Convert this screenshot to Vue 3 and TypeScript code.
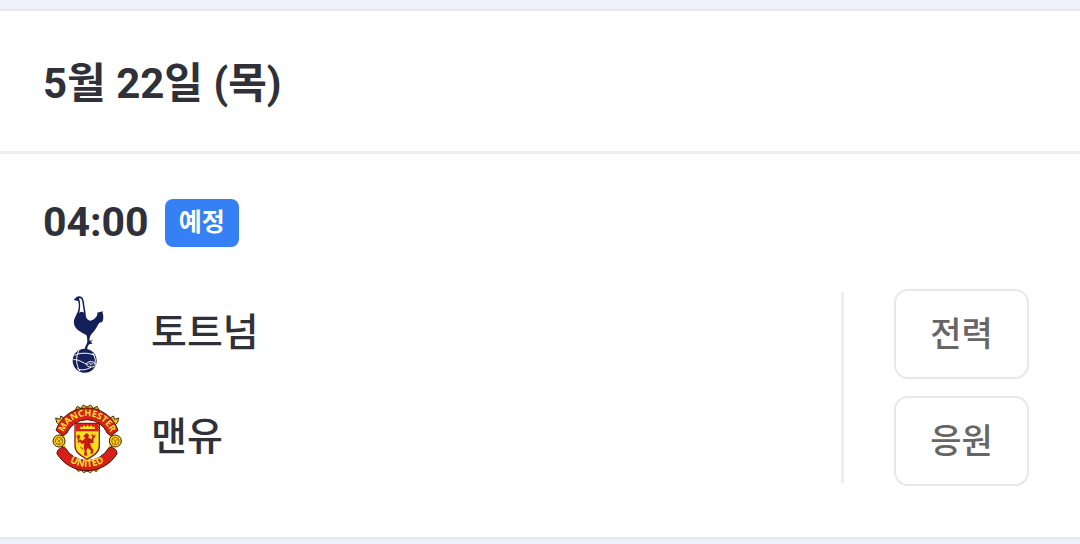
<script setup lang="ts">
interface Team {
  id: 'spurs' | 'united'
  name: string
}

const date = '5월 22일 (목)'
const time = '04:00'
const status = '예정'
const teams: Team[] = [
  { id: 'spurs', name: '토트넘' },
  { id: 'united', name: '맨유' },
]
const actions: string[] = ['전력', '응원']
</script>

<template>
  <main class="page">
    <section class="card">
      <header class="card-head">
        <h1 class="date">{{ date }}</h1>
      </header>
      <article class="match">
        <div class="meta">
          <time class="time">{{ time }}</time>
          <span class="status">{{ status }}</span>
        </div>
        <div class="body">
          <ul class="teams">
            <li v-for="team in teams" :key="team.id" class="team">
              <svg v-if="team.id === 'spurs'" class="crest" viewBox="21 30 240 240" aria-hidden="true">
                <g fill="#14205a">
                  <path d="M105 41C108 34 119 31 126 37C131 42 132 51 133 61C135 72 137 82 137 88C137 99 143 107 151 107C161 106 166 99 170 94C173 90 171 85 173 82C178 84 179 79 189 80C185 84 191 86 189 90C192 95 188 97 190 101C187 105 190 109 185 112C180 111 177 114 174 119C168 132 160 140 154 148C149 154 149 161 148 167L159 166L151 172C161 174 158 178 149 177C144 181 141 187 142 193L134 193C135 182 142 177 142 169C141 160 142 154 138 149C124 143 110 135 104 123C99 111 102 101 109 89C116 77 119 60 114 48L104 46L101 43Z" />
                  <circle cx="134" cy="227" r="36" />
                </g>
                <path d="M117 40C125 38 127 46 128 57L132 83C126 79 122 80 118 84C121 70 122 53 117 40Z" fill="#fff" />
                <g fill="none" stroke="#fff" stroke-width="3">
                  <path d="M104 211C119 203 144 202 164 211" />
                  <path d="M117 197C106 215 108 241 120 259" />
                  <path d="M100 224C117 222 129 235 143 238" />
                  <path d="M158 204C166 216 168 228 164 238" />
                  <path d="M112 251C126 259 143 252 153 247" />
                  <ellipse cx="153" cy="238" rx="13" ry="8" />
                  <path d="M145 238L150 234L152 241L157 234L160 239" stroke-width="2" />
                </g>
              </svg>
              <svg v-else class="crest" viewBox="21 9 240 240" aria-hidden="true">
                <defs>
                  <path id="crest-top" d="M67 123A75 75 0 0 1 215 123" />
                  <path id="crest-bottom" d="M61 170A96 96 0 0 0 221 170" />
                </defs>
                <g fill="#efc51c" stroke="#3a2a08" stroke-width="3">
                  <path d="M105 43L112 31L122 37L130 27L141 33L152 27L160 37L171 31L178 43L169 55L114 55Z" />
                  <path d="M105 215L115 226L124 222L131 230L141 225L152 230L160 222L169 227L178 215L168 203L115 203Z" />
                  <path d="M50 79L47 66L60 70L62 60L77 68L64 93Z" />
                  <path d="M233 79L236 66L223 70L221 60L206 68L219 93Z" />
                  <circle cx="141" cy="133" r="76" />
                </g>
                <circle cx="141" cy="133" r="68" fill="#fff" />
                <path d="M48 103A98 98 0 0 1 234 103L214 119L202 112A66 66 0 0 0 80 112L68 119Z" fill="#d51f18" stroke="#4c1608" stroke-width="3" />
                <path d="M51 173C50 160 65 151 76 156A75 75 0 0 0 206 156C217 151 232 160 231 173A105 105 0 0 1 51 173Z" fill="#d51f18" stroke="#4c1608" stroke-width="3" />
                <path d="M105 82H178V149C178 169 161 178 141 190C121 178 105 169 105 149Z" fill="#f8df20" stroke="#8d1d0b" stroke-width="4" />
                <path d="M107 84H176V106H107Z" fill="#d51f18" />
                <path d="M119 99L123 91L128 94L132 87L137 93L143 87L148 93L154 87L158 94L163 91L165 99Z" fill="#f8df20" />
                <path d="M134 116L140 111L147 117L145 125L155 130L158 119L153 121L157 113L162 120L166 114L166 122L161 127L160 141L150 141L153 153L160 162L159 172L151 174L153 164L143 155L139 164L142 179L132 178L134 164L131 154L133 141L126 145L120 137L116 139L119 129L127 134L136 126L130 121Z" fill="#c9180f" />
                <path d="M115 116V141M112 118V126H119V118M121 153L130 161" fill="none" stroke="#c9180f" stroke-width="3" />
                <g fill="#f5cb1c" stroke="#3a2a08" stroke-width="3">
                  <circle cx="57" cy="135" r="18" />
                  <circle cx="226" cy="135" r="18" />
                </g>
                <g fill="none" stroke="#a26d0c" stroke-width="3">
                  <circle cx="57" cy="135" r="11" />
                  <circle cx="226" cy="135" r="11" />
                  <path d="M50 128L57 135L64 129M57 135V144M219 128L226 135L233 129M226 135V144" />
                </g>
                <text class="crest-text"><textPath href="#crest-top" startOffset="50%">MANCHESTER</textPath></text>
                <text class="crest-text crest-text-lower"><textPath href="#crest-bottom" startOffset="50%">UNITED</textPath></text>
              </svg>
              <span class="name">{{ team.name }}</span>
            </li>
          </ul>
          <div class="actions">
            <button v-for="action in actions" :key="action" type="button" class="action">{{ action }}</button>
          </div>
        </div>
      </article>
    </section>
  </main>
</template>

<style>
body {
  margin: 0;
  background: #eef1fa;
}
</style>

<style scoped>
.page {
  padding: 9px 0 5px;
  font-family: Roboto, "Noto Sans CJK KR", sans-serif;
  color: #303038;
}
.card {
  background: #fff;
  border-top: 2px solid #e9e9ed;
  border-bottom: 2px solid #e9e9ed;
}
.card-head {
  padding: 43px 43px 37px;
  border-bottom: 3px solid #eeeeef;
}
.date {
  margin: 0;
  font-size: 42px;
  line-height: 60px;
  font-weight: 700;
}
.match {
  padding: 45px 51px 51px 43px;
}
.meta {
  display: flex;
  align-items: center;
  gap: 16px;
  margin-bottom: 42px;
}
.time {
  font-size: 41px;
  line-height: 46px;
  padding-bottom: 2px;
  font-weight: 700;
}
.status {
  padding: 0 14px;
  border-radius: 8px;
  background: #3580f5;
  color: #fff;
  font-size: 25px;
  line-height: 48px;
  font-weight: 700;
}
.body {
  display: flex;
  align-items: center;
}
.teams {
  flex: 1;
  display: flex;
  flex-direction: column;
  gap: 24px;
  margin: 0;
  padding: 3px 0 4px;
  list-style: none;
  border-right: 3px solid #eeeeef;
}
.team {
  display: flex;
  align-items: center;
  gap: 24px;
  padding-left: 4px;
}
.crest {
  width: 80px;
  height: 80px;
}
.crest-text {
  fill: #ffe33a;
  font-family: "Open Sans", sans-serif;
  font-size: 27px;
  font-weight: 700;
  text-anchor: middle;
}
.crest-text-lower {
  font-size: 29px;
}
.name {
  padding-bottom: 4px;
  font-size: 39px;
  line-height: 56px;
  font-weight: 500;
}
.actions {
  display: flex;
  flex-direction: column;
  gap: 17px;
  margin-left: 50px;
}
.action {
  width: 135px;
  height: 90px;
  padding: 0 0 6px;
  border: 2px solid #e8e8e8;
  border-radius: 14px;
  background: #fff;
  color: #666;
  font-family: inherit;
  font-size: 34px;
  font-weight: 500;
}
</style>
